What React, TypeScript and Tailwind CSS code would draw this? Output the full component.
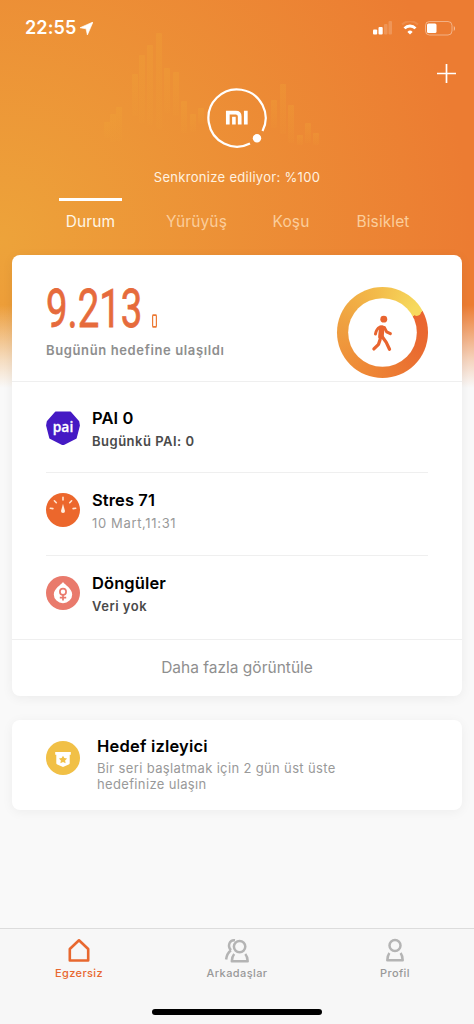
import type { ReactNode } from "react";

const tabs = [
  { label: "Durum", width: "w-[63px]", active: true },
  { label: "Yürüyüş", width: "w-[61px]", active: false },
  { label: "Koşu", width: "w-[40px]", active: false },
  { label: "Bisiklet", width: "w-[56px]", active: false },
];

const leftBars = [
  [104, 122, 16], [110, 114, 28], [116, 107, 34], [132, 74, 42], [139, 55, 68],
  [147, 45, 80], [156, 33, 96], [164, 68, 45], [173, 72, 44], [181, 101, 32],
  [190, 114, 18], [198, 108, 16],
];

const rightBars = [
  [271, 100, 28], [280, 84, 50], [288, 105, 38], [297, 135, 10], [305, 123, 20], [313, 133, 12],
];

function HeaderBars() {
  return (
    <svg className="absolute left-0 top-0" width="474" height="160">
      <defs>
        <linearGradient id="bars" x1="0" y1="0" x2="0" y2="1">
          <stop offset="0" stopColor="#f0a536" stopOpacity=".3" />
          <stop offset="1" stopColor="#f0a536" stopOpacity=".06" />
        </linearGradient>
      </defs>
      {[...leftBars, ...rightBars].map(([x, y, h]) => (
        <rect key={x} x={x} y={y} width="6" height={h} rx="1" fill="url(#bars)" />
      ))}
    </svg>
  );
}

function StatusBar() {
  return (
    <div className="flex h-14 items-center justify-between pl-[25px] pr-[18px]">
      <div className="flex items-center gap-1 text-white">
        <span className="text-[18px] font-semibold leading-6 tracking-[0.1px]">22:55</span>
        <svg width="13" height="13" viewBox="0 0 12 12">
          <path d="M12 0L0 5.300l5.600 1L6.800 12z" fill="#fff" stroke="#fff" strokeWidth=".6" strokeLinejoin="round" />
        </svg>
      </div>

      <div className="flex items-center">
        <svg className="mr-px" width="22" height="14" viewBox="0 0 22 14" fill="#fff">
          <rect x="3" y="8.500" width="4.200" height="5" rx="1" />
          <rect x="8.500" y="6" width="4.200" height="7.500" rx="1" />
          <rect x="14" y="3" width="3.500" height="10.500" rx="1" opacity=".18" />
          <rect x="18.500" y="0" width="3.500" height="13.500" rx="1" opacity=".18" />
        </svg>
        <svg className="ml-2" width="18" height="14" viewBox="0 0 18 14" fill="none" stroke="#fff">
          <path d="M1 3.500a11.500 11.500 0 0 1 16 0" strokeWidth="2" opacity=".12" />
          <path d="M3.500 7.400a7.500 7.500 0 0 1 11 0" strokeWidth="2.800" />
          <path d="M9 13.500L6.400 10.900a3.600 3.600 0 0 1 5.200 0z" fill="#fff" stroke="none" />
        </svg>
        <svg className="ml-[6px]" width="31" height="15" viewBox="0 0 31 15">
          <rect x=".5" y=".5" width="26.500" height="13.500" rx="4" fill="none" stroke="#fff" opacity=".4" />
          <rect x="2" y="2.500" width="9.500" height="9.500" rx="1.500" fill="#fff" />
          <path d="M28.800 5v5c1.600-.8 1.600-4.200 0-5z" fill="#fff" opacity=".5" />
        </svg>
      </div>
    </div>
  );
}

function MiLogo() {
  return (
    <svg width="62" height="62" viewBox="0 0 62 62" fill="none">
      <path d="M56.500 44A28.600 28.600 0 1 0 44 56.500" stroke="#fff" strokeWidth="2.200" />
      <circle cx="51" cy="51.300" r="4.200" fill="#fff" />
      <path
        d="M21.800 37.500V25.600H29.800Q33.700 25.600 33.700 29.400V37.500M39.800 23.800V37.500"
        stroke="#fff"
        strokeWidth="3.700"
      />
      <path d="M27.900 29.800V37.500" stroke="#fff" strokeWidth="3.600" />
    </svg>
  );
}

function WalkRing() {
  return (
    <div className="relative h-[91px] w-[91px] rounded-full bg-[conic-gradient(from_62deg,#ea6530,#e96a30_50deg,#ee8735_140deg,#efa040_220deg,#f3bb4a_290deg,#f6d95d_350deg,#f7d95e)]">
      <svg className="absolute inset-0" width="91" height="91" viewBox="0 0 92 92">
        <circle cx="80.500" cy="24.500" r="4.800" fill="#f7d95e" />
        <circle cx="46" cy="46" r="34.700" fill="#fff" />
        <g stroke="#e8642f" strokeLinecap="round" strokeLinejoin="round" fill="none">
          <circle cx="47.300" cy="32.500" r="3.500" fill="#e8642f" stroke="none" />
          <path d="M45.300 41.500l-.9 8.500" strokeWidth="5.600" />
          <path d="M43.500 40.500q-3.800 2-4.600 7M48 41l2.200 4.300 3.800 1.900" strokeWidth="3" />
          <path d="M45.200 49.500l4.600 6.500 3.300 7M43.600 53l-1.600 5-4.700 4.600" strokeWidth="3.300" />
        </g>
      </svg>
    </div>
  );
}

function PaiIcon() {
  return (
    <svg width="34" height="34" viewBox="0 0 34 34">
      <path
        d="M9.600 1.500h14.800L32.300 10.500 33 14.500 29.800 27 17.500 33.200Q17 33.400 16.500 33.200L4.200 27 1 14.500 1.700 10.500z"
        fill="#451ac4"
        stroke="#451ac4"
        strokeWidth="1.800"
        strokeLinejoin="round"
      />
      <text
        x="17"
        y="20.600"
        textAnchor="middle"
        fill="#fff"
        stroke="#fff"
        strokeWidth=".3"
        fontSize="14.500"
        fontWeight="600"
        fontFamily="'Open Sans', sans-serif"
        textLength="20.500"
        lengthAdjust="spacingAndGlyphs"
      >
        pai
      </text>
    </svg>
  );
}

function StressIcon() {
  return (
    <svg width="34" height="34" viewBox="0 0 34 34">
      <circle cx="17" cy="17" r="17" fill="#ec672c" />
      <path
        d="M4.300 15.300l2.600.3M8.400 7.800l1.900 1.900M17 4.300v2.600M25.600 7.800l-1.900 1.900M29.700 15.300l-2.600.3"
        stroke="#ffe5d0"
        strokeWidth="1.600"
        strokeLinecap="round"
      />
      <path d="M17 10.800l2 7.200a2 2 0 1 1-4 0z" fill="#ffeedf" />
    </svg>
  );
}

function CycleIcon() {
  return (
    <svg width="34" height="34" viewBox="0 0 34 34">
      <circle cx="17" cy="17" r="17" fill="#e97a6c" />
      <path d="M17 6c2 3 9.200 6.500 9.200 12.400a9.200 8.800 0 0 1-18.400 0C7.800 12.500 15 9 17 6z" fill="#fff" />
      <g fill="none" stroke="#e97a6c" strokeWidth="1.700">
        <circle cx="17" cy="15.800" r="3.100" />
        <path d="M17 19v5.500M13.800 21.700h6.400" />
      </g>
    </svg>
  );
}

function GoalIcon() {
  return (
    <svg width="34" height="34" viewBox="0 0 34 34">
      <circle cx="17" cy="17" r="17" fill="#f1c046" />
      <path d="M9.200 11h15.600v2.700h-1.100v8.500q0 1-1 1.400L17 26l-5.700-2.400q-1-.4-1-1.400v-8.500H9.200z" fill="#fff" />
      <path
        d="M17 14.800l1.300 2.300 2.800.5-2 2 .5 2.600-2.600-1.100-2.600 1.100.5-2.600-2-2 2.800-.5z"
        fill="#f1c046"
      />
    </svg>
  );
}

type RowProps = {
  icon: ReactNode;
  title: string;
  text: string;
  muted?: boolean;
};

function MetricRow({ icon, title, text, muted }: RowProps) {
  return (
    <div className="flex gap-3 pt-4">
      <div className="pt-1">{icon}</div>
      <div>
        <h3 className="text-[16.5px] font-semibold leading-[22px] tracking-[0.1px] text-black">{title}</h3>
        <p
          className={
            muted
              ? "mt-[3px] text-[13px] leading-[18px] tracking-[0.65px] text-[#999]"
              : "mt-[3px] text-[13px] font-semibold leading-[18px] tracking-[0.5px] text-[#4a4a4a]"
          }
        >
          {text}
        </p>
      </div>
    </div>
  );
}

function BottomNav() {
  return (
    <nav className="flex h-24 flex-col items-center border-t border-[#dcdcdc] bg-[#f7f7f7]">
      <div className="grid w-full grid-cols-3 text-[11px] font-medium leading-[14px] tracking-[0.4px] text-[#999]">
        <div className="flex flex-col items-center pt-[9px] text-[#e8682f]">
          <svg width="26" height="26" viewBox="0 0 26 26" fill="none" stroke="currentColor" strokeWidth="2.600">
            <path d="M3.800 22.500V11L13 2.300l9.200 8.700v11.500z" strokeLinejoin="round" />
          </svg>
          <span className="mt-[2px]">Egzersiz</span>
        </div>
        <div className="flex flex-col items-center pt-[9px]">
          <svg width="26" height="26" viewBox="0 0 26 26" fill="none" stroke="#b4b4b4" strokeWidth="2.500">
            <circle cx="15.600" cy="8.600" r="5.700" />
            <path d="M10.200 16Q8 18.500 7.800 23.200H23.700Q23.500 18.500 21.300 16" strokeLinejoin="round" />
            <path d="M11 2.200C5.500 1.500 3 8 7 12.200M6.900 12.200Q2.800 15.500 2.100 21.500" />
          </svg>
          <span className="mt-[2px]">Arkadaşlar</span>
        </div>
        <div className="flex flex-col items-center pt-[9px]">
          <svg width="26" height="26" viewBox="0 0 26 26" fill="none" stroke="#b4b4b4" strokeWidth="2.500">
            <circle cx="13" cy="7.600" r="5.500" />
            <path d="M7.400 15Q5.500 17.500 5.300 22.300H20.700Q20.500 17.500 18.600 15" strokeLinejoin="round" />
          </svg>
          <span className="mt-[2px]">Profil</span>
        </div>
      </div>
      <div className="mt-[29px] h-[6px] w-[170px] rounded-full bg-black" />
    </nav>
  );
}

export default function App() {
  return (
    <div className="relative flex h-[1024px] w-[474px] flex-col overflow-hidden bg-[#f9f9f9] bg-[linear-gradient(to_bottom,#f9f9f900_305px,#f9f9f9b3_360px,#f9f9f9_388px),radial-gradient(470px_480px_at_0px_240px,#eda33a,#ec7c32)] font-['Inter',sans-serif]">
      <HeaderBars />

      <header className="relative h-[255px]">
        <StatusBar />
        <div className="flex h-8 justify-end pr-[18px] pt-2">
          <svg width="19" height="19" viewBox="0 0 19 19" stroke="#fff" strokeWidth="1.700">
            <path d="M0 9.500h19M9.500 0v19" />
          </svg>
        </div>
        <div className="-mt-px flex justify-center">
          <MiLogo />
        </div>
        <p className="mt-[19px] text-center text-[13px] leading-[18px] tracking-[0.3px] text-[#fff2e0]">
          Senkronize ediliyor: %100
        </p>
        <div className="mt-3 flex justify-between pl-[59px] pr-[63px]">
          {tabs.map((tab) => (
            <div
              key={tab.label}
              className={`flex justify-center whitespace-nowrap border-t-[3px] pt-[9px] text-[15.5px] leading-6 tracking-[0.1px] ${tab.width} ${
                tab.active ? "border-white text-[#fff6e6]" : "border-transparent text-[#fbcd9b]"
              }`}
            >
              {tab.label}
            </div>
          ))}
        </div>
      </header>

      <main className="relative flex flex-1 flex-col px-3">
        <section className="h-[441px] rounded-lg bg-white shadow-[0_2px_12px_rgba(0,0,0,0.06)]">
          <div className="flex h-[127px] justify-between border-b border-[#efefef] pl-[34px] pr-[34px]">
            <div className="pt-[23px]">
              <div className="flex h-[62px] items-center">
                <div className="w-[94px]">
                  <span className="inline-block origin-left scale-x-[0.71] font-['Roboto'] text-[54px] leading-[62px] text-[#e66b3c] [-webkit-text-stroke:0.8px_#e66b3c]">
                    9.213
                  </span>
                </div>
                <svg className="ml-3 mt-6" width="5" height="14" viewBox="0 0 5 14" fill="none" stroke="#ec7a35">
                  <rect x=".6" y="1.500" width="3.800" height="11" rx=".8" strokeWidth="1.200" />
                  <path d="M.5 1.200h4M.5 12.800h4" strokeWidth="1.800" />
                </svg>
              </div>
              <p className="mt-px text-[13px] font-semibold leading-[18px] tracking-[0.62px] text-[#8e8e8e]">
                Bugünün hedefine ulaşıldı
              </p>
            </div>
            <div className="pt-8">
              <WalkRing />
            </div>
          </div>

          <div className="h-[258px] border-b border-[#efefef] px-[34px] pt-[9px]">
            <div className="h-[82px] border-b border-[#efefef]">
              <MetricRow icon={<PaiIcon />} title="PAI 0" text="Bugünkü PAI: 0" />
            </div>
            <div className="h-[83px] border-b border-[#efefef]">
              <MetricRow icon={<StressIcon />} title="Stres 71" text="10 Mart,11:31" muted />
            </div>
            <MetricRow icon={<CycleIcon />} title="Döngüler" text="Veri yok" />
          </div>

          <button className="flex h-[55px] w-full items-center justify-center text-[15.500px] text-[#8f8f8f]">
            Daha fazla görüntüle
          </button>
        </section>

        <section className="mt-6 flex h-[90px] gap-[17px] rounded-lg bg-white pl-[34px] pt-[15px] shadow-[0_2px_12px_rgba(0,0,0,0.05)]">
          <div className="pt-[6px]">
            <GoalIcon />
          </div>
          <div>
            <h3 className="text-[16.5px] font-semibold leading-[22px] tracking-[0.2px] text-black">Hedef izleyici</h3>
            <p className="mt-[3px] w-[250px] text-[13px] leading-4 tracking-[0.35px] text-[#999]">
              Bir seri başlatmak için 2 gün üst üste hedefinize ulaşın
            </p>
          </div>
        </section>
      </main>

      <BottomNav />
    </div>
  );
}
